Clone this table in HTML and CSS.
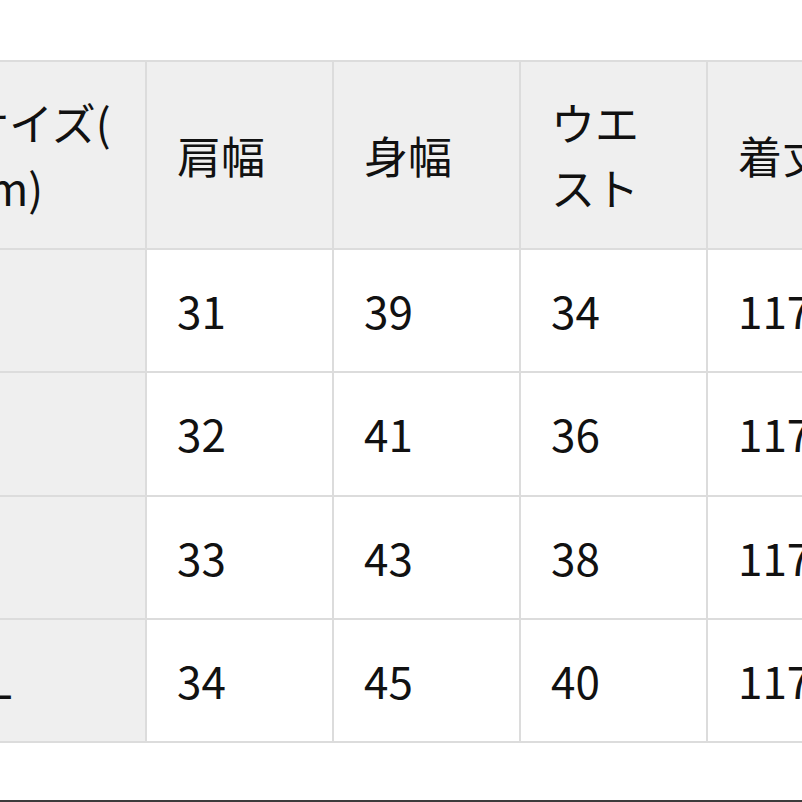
FILE: index.html
```html
<!DOCTYPE html>
<html lang="ja">
<head>
<meta charset="utf-8">
<title>サイズ表</title>
<link rel="stylesheet" href="styles.css">
</head>
<body>
<div class="page">
  <div class="size-table">
    <div class="cell head first">サイズ(<br>cm)</div>
    <div class="cell head">肩幅</div>
    <div class="cell head">身幅</div>
    <div class="cell head">ウエスト</div>
    <div class="cell head">着丈</div>

    <div class="cell first">S</div>
    <div class="cell">31</div>
    <div class="cell">39</div>
    <div class="cell">34</div>
    <div class="cell">117</div>

    <div class="cell first">M</div>
    <div class="cell">32</div>
    <div class="cell">41</div>
    <div class="cell">36</div>
    <div class="cell">117</div>

    <div class="cell first">L</div>
    <div class="cell">33</div>
    <div class="cell">43</div>
    <div class="cell">38</div>
    <div class="cell">117</div>

    <div class="cell first">XL</div>
    <div class="cell">34</div>
    <div class="cell">45</div>
    <div class="cell">40</div>
    <div class="cell">117</div>
  </div>
  <div class="bottom-bar"></div>
</div>
</body>
</html>
```

FILE: styles.css
```css
html, body {
  margin: 0;
  padding: 0;
  background: #ffffff;
  overflow: hidden;
}

.page {
  width: 802px;
  height: 802px;
  box-sizing: border-box;
  padding-top: 60px;
  overflow: hidden;
  display: flex;
  flex-direction: column;
  font-family: "Noto Sans CJK JP", "Noto Sans", sans-serif;
  color: #111111;
}

.size-table {
  align-self: flex-start;
  margin-left: -63px;
  display: grid;
  grid-template-columns: 208px 185px 185px 185px 185px;
  grid-template-rows: 186px repeat(4, 121.33px);
  gap: 2px;
  padding: 2px 0;
  background: #dcdcdc;
}

.cell {
  background: #ffffff;
  box-sizing: border-box;
  padding: 0 28px 0 30px;
  display: flex;
  align-items: center;
  font-size: 44px;
  line-height: 65px;
}

.cell.head,
.cell.first {
  background: #efefef;
}

.cell.first {
  padding-left: 26px;
}

.cell.head.first {
  padding-left: 28px;
}

.bottom-bar {
  margin-top: auto;
  height: 2px;
  background: #3c3c3c;
}
```
